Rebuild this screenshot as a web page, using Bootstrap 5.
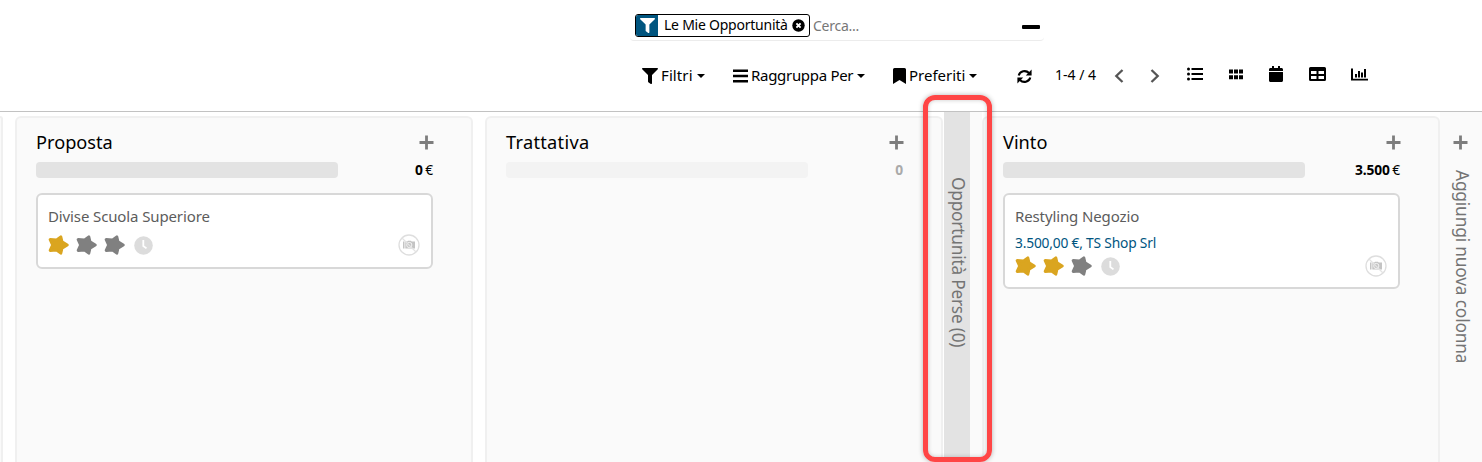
<!DOCTYPE html>
<html lang="it">
<head>
<meta charset="utf-8">
<meta name="viewport" content="width=device-width, initial-scale=1">
<title>Pipeline</title>
<link href="https://cdn.jsdelivr.net/npm/bootstrap@5.3.0/dist/css/bootstrap.min.css" rel="stylesheet">
<style>
body{font-family:"Noto Sans","Open Sans",sans-serif;font-size:15px;color:#000;height:462px;overflow:hidden;background:#fff}
svg{display:block;flex:none;fill:currentColor}
.t{display:block;white-space:nowrap;flex:none;line-height:20px}
.panel{height:112px;border-bottom:1px solid #c2c2c2}
.search{width:414px;height:41px;margin-left:630px;padding:14px 4px 0 5px;border-bottom:1px solid #ececec;border-radius:4px}
.facet{width:175px;height:23px;border:1px solid #000;border-radius:3px;overflow:hidden}
.facet-icon{width:22px;height:21px;background:#00557f;color:#fff}
.facet .t{width:124px;margin:-1px 0 0 6px;font-size:14px;letter-spacing:-.24px}
.hint{color:#777;font-size:14px;letter-spacing:-.25px;margin:2px 0 0 3px}
.tools{height:70px;padding-left:642px}
.tools .t{margin-top:-2px!important}
.caret{width:0;height:0;border:4px solid transparent;border-top-color:#000;border-bottom:0;flex:none}
.board{height:350px}
.stage{width:458px;border:2px solid #f0f0f0;border-bottom:0;border-radius:6px 6px 0 0;background:#fafafa;margin-top:4px;padding:13px 38px 0 19px;flex:none}
.zone{background:#fafafa;flex:none}
.stage-title{font-size:18.2px;line-height:24px;margin:-1px 0 1px;white-space:nowrap}
.plus{color:#7d7d7d}
.meter{width:302px;height:16px;border-radius:4px;background:#e3e3e3}
.meter.blank{background:#f3f3f3}
.total{font-size:13.8px;line-height:16px;white-space:nowrap;letter-spacing:-.15px;word-spacing:-1px}
.deal{height:76px;border:2px solid #d8d8d8;border-radius:6px;background:#fff;padding:11px 11px 0 10px;margin-top:15px;color:#5c5c5c}
.deal.tall{height:96px}
.deal-name{font-size:15px;letter-spacing:-.12px;line-height:20px;white-space:nowrap}
.amount{color:#00557f;font-size:13.8px;letter-spacing:-.2px;line-height:20px;margin:7px 0 -6px;white-space:nowrap}
.rate{gap:6px;margin-top:8px;color:#808080}
.rate .gold,.rate .star{margin-left:-1px;margin-right:1px}
.gold{color:#daa520}
.folded{width:26px;background:#e3e3e3;margin-left:1px;flex:none}
.upright{writing-mode:vertical-rl;white-space:nowrap;color:#747474;line-height:26px;font-size:17.3px}
.marker{position:absolute;left:923px;top:95px;width:69px;height:367px;border:5px solid #ff4545;border-radius:12px;box-shadow:0 0 5px rgba(0,0,0,.3),inset 0 0 4px rgba(0,0,0,.22)}
</style>
</head>
<body class="position-relative">
<svg width="0" height="0" class="position-absolute">
<symbol id="filter" viewBox="0 0 512 512"><path d="M488 0H24C3 0-8 26 7 41l185 185v206c0 8 4 15 10 20l80 56c16 11 38 0 38-20V226L505 41C520 26 509 0 488 0z"/></symbol>
<symbol id="star" viewBox="0 0 22 20"><path d="M20.200 10 15 13.100 13.800 18.100 9.300 14.900 3.200 15.400 5.700 10 3.200 4.600 9.300 5.100 13.800 1.900 15 6.900Z" stroke="currentColor" stroke-width="3" stroke-linejoin="round"/></symbol>
<symbol id="clock" viewBox="0 0 19 19"><circle cx="9.5" cy="9.5" r="9.3" fill="#dcdcdc"/><path d="M9.3 4v6l3.2 2.4" fill="none" stroke="#fff" stroke-width="1.8"/></symbol>
<symbol id="nocam" viewBox="0 0 22 22"><circle cx="11" cy="11" r="10" fill="#fff" stroke="#dedede" stroke-width="1.3"/><path d="M5 7.600h1.500v7H5zM7.300 7.600h2L10 6.800h3l.7.800H17V14.600H7.300z" fill="#c4c4c4"/><circle cx="11.300" cy="11" r="2.600" fill="#c4c4c4" stroke="#f4f4f4"/><path d="M4 4l14 14" stroke="#e3e3e3" stroke-width="1.2"/></symbol>
<symbol id="plus" viewBox="0 0 15 15"><path d="M6.1.5h2.8v5.6h5.6v2.8H8.9v5.6H6.1V8.9H.5V6.1h5.6z"/></symbol>
</svg>

<header class="panel">
  <div class="search d-flex align-items-start">
    <div class="facet d-flex align-items-center">
      <span class="facet-icon d-flex align-items-center justify-content-center"><svg width="15" height="15"><use href="#filter"/></svg></span>
      <span class="t">Le Mie Opportunità</span>
      <svg width="13" height="13" viewBox="0 0 13 13" style="margin-left:4px"><circle cx="6.5" cy="6.5" r="6.2"/><path d="M4.4 4.4l4.2 4.2M8.6 4.4L4.4 8.6" stroke="#fff" stroke-width="1.9"/></svg>
    </div>
    <span class="t hint">Cerca...</span>
    <svg class="ms-auto" width="18" height="4" viewBox="0 0 18 4" style="margin-top:11px"><rect width="18" height="4" rx="1"/></svg>
  </div>
  <nav class="tools d-flex align-items-center">
    <svg width="16" height="16"><use href="#filter"/></svg>
    <span class="t" style="width:32px;margin:0 4px 0 3px;letter-spacing:.1px">Filtri</span><i class="caret"></i>
    <svg width="15" height="14" viewBox="0 0 15 14" style="margin-left:28px"><path d="M0 .5h15V3H0zM0 5.700h15v2.500H0zM0 11h15v2.500H0z"/></svg>
    <span class="t" style="width:103px;margin:0 3px;letter-spacing:-.3px">Raggruppa Per</span><i class="caret"></i>
    <svg width="13" height="16" viewBox="0 0 13 16" style="margin-left:28px"><path d="M1.500 0h10Q13 0 13 1.500V16l-6.500-4L0 16V1.500Q0 0 1.500 0z"/></svg>
    <span class="t" style="width:58px;margin:0 2px 0 3px">Preferiti</span><i class="caret"></i>
    <svg width="15" height="15" viewBox="0 0 15 15" style="margin-left:40px"><path d="M1.700 6.500A6 5.700 0 0 1 12 4M13.300 8.500A6 5.700 0 0 1 3 11" fill="none" stroke="currentColor" stroke-width="2.100"/><path d="M14.600.6v5.800H8.800zM.4 14.400V8.600h5.800z"/></svg>
    <span class="t" style="width:42px;margin:0 17px 0 23px;font-size:14px">1-4 / 4</span>
    <svg width="10" height="14" viewBox="0 0 10 14" style="margin-right:26px;color:#555"><path d="M8.500 1 2.300 7l6.200 6" fill="none" stroke="currentColor" stroke-width="2.300"/></svg>
    <svg width="10" height="14" viewBox="0 0 10 14" style="margin-right:27px;color:#555"><path d="M1.500 1l6.200 6-6.200 6" fill="none" stroke="currentColor" stroke-width="2.300"/></svg>
    <svg class="mb-1" width="16" height="14" viewBox="0 0 16 14"><path d="M4.500 1H16v2H4.500zM4.500 6H16v2H4.500zM4.500 11H16v2H4.500z"/><circle cx="1.500" cy="2" r="1.500"/><circle cx="1.500" cy="7" r="1.500"/><circle cx="1.500" cy="12" r="1.500"/></svg>
    <svg class="mb-1" width="14" height="11" viewBox="0 0 14 11" style="margin-left:26px"><path d="M0 .5h4v4H0zM5 .5h4v4H5zM10 .5h4v4h-4zM0 6.200h4v4H0zM5 6.200h4v4H5zM10 6.200h4v4h-4z"/></svg>
    <svg class="mb-1" width="14" height="16" viewBox="0 0 448 512" style="margin-left:26px"><path d="M12 192h424c6.600 0 12 5.400 12 12v260c0 26.500-21.500 48-48 48H48c-26.500 0-48-21.500-48-48V204c0-6.600 5.400-12 12-12zm436-44v-36c0-26.500-21.500-48-48-48h-48V12c0-6.600-5.400-12-12-12h-40c-6.600 0-12 5.400-12 12v52H160V12c0-6.600-5.400-12-12-12h-40c-6.600 0-12 5.400-12 12v52H48C21.500 64 0 85.500 0 112v36c0 6.600 5.400 12 12 12h424c6.600 0 12-5.400 12-12z"/></svg>
    <svg class="mb-1" width="17" height="14" viewBox="0 0 17 14" style="margin-left:26px"><path fill-rule="evenodd" d="M1.500 0h14Q17 0 17 1.500v11q0 1.500-1.500 1.500h-14Q0 14 0 12.500v-11Q0 0 1.500 0zM2 4v3h5.500V4zM9.500 4v3H15V4zM2 9v3h5.500V9zM9.500 9v3H15V9z"/></svg>
    <svg class="mb-1" width="17" height="13" viewBox="0 0 17 13" style="margin-left:25px"><path d="M0 .5h2v10.300h15V12.500H0zM4 6h2v3.500H4zM7 3h2v6.500H7zM10 4.500h2v5h-2zM13 1h2v8.500h-2z"/></svg>
  </nav>
</header>

<main class="board d-flex">
  <div style="width:3px;border:solid #f0f0f0;border-width:2px 2px 0 0;border-radius:0 6px 0 0;margin:4px 12px 0 0;background:#fafafa"></div>
  <section class="stage">
    <div class="d-flex justify-content-between align-items-start"><div class="stage-title">Proposta</div><svg class="plus" width="15" height="15" style="margin:4px -1px 0 0"><use href="#plus"/></svg></div>
    <div class="d-flex justify-content-between" style="margin-top:7px"><div class="meter"></div><div class="total"><b>0</b> €</div></div>
    <article class="deal">
      <div class="deal-name">Divise Scuola Superiore</div>
      <div class="rate d-flex align-items-center"><svg class="gold" width="22" height="20"><use href="#star"/></svg><svg class="star" width="22" height="20"><use href="#star"/></svg><svg class="star" width="22" height="20"><use href="#star"/></svg><svg width="19" height="19" style="margin-left:2px"><use href="#clock"/></svg><svg class="ms-auto" width="22" height="22"><use href="#nocam"/></svg></div>
    </article>
  </section>
  <div style="width:12px;flex:none"></div>
  <section class="stage">
    <div class="d-flex justify-content-between align-items-start"><div class="stage-title" style="letter-spacing:.28px">Trattativa</div><svg class="plus" width="15" height="15" style="margin:4px -1px 0 0"><use href="#plus"/></svg></div>
    <div class="d-flex justify-content-between" style="margin-top:7px"><div class="meter blank"></div><div class="total" style="color:#aaa"><b>0</b></div></div>
  </section>
  <div class="folded d-flex"><div class="upright" style="padding-top:65px;letter-spacing:-.22px;margin-left:1px">Opportunità Perse (0)</div></div>
  <div class="zone" style="width:12px"></div>
  <section class="stage">
    <div class="d-flex justify-content-between align-items-start"><div class="stage-title">Vinto</div><svg class="plus" width="15" height="15" style="margin:4px -1px 0 0"><use href="#plus"/></svg></div>
    <div class="d-flex justify-content-between" style="margin-top:7px"><div class="meter"></div><div class="total"><b>3.500</b> €</div></div>
    <article class="deal tall">
      <div class="deal-name">Restyling Negozio</div>
      <div class="amount">3.500,00 €, TS Shop Srl</div>
      <div class="rate d-flex align-items-center"><svg class="gold" width="22" height="20"><use href="#star"/></svg><svg class="gold" width="22" height="20"><use href="#star"/></svg><svg class="star" width="22" height="20"><use href="#star"/></svg><svg width="19" height="19" style="margin-left:2px"><use href="#clock"/></svg><svg class="ms-auto" width="22" height="22"><use href="#nocam"/></svg></div>
    </article>
  </section>
  <div class="zone flex-fill" style="padding:23px 0 0 8px"><svg class="plus" width="15" height="15" style="margin-left:5px"><use href="#plus"/></svg><div class="upright" style="margin:20px 0 0 1px;letter-spacing:-.16px">Aggiungi nuova colonna</div></div>
</main>
<div class="marker"></div>
</body>
</html>
